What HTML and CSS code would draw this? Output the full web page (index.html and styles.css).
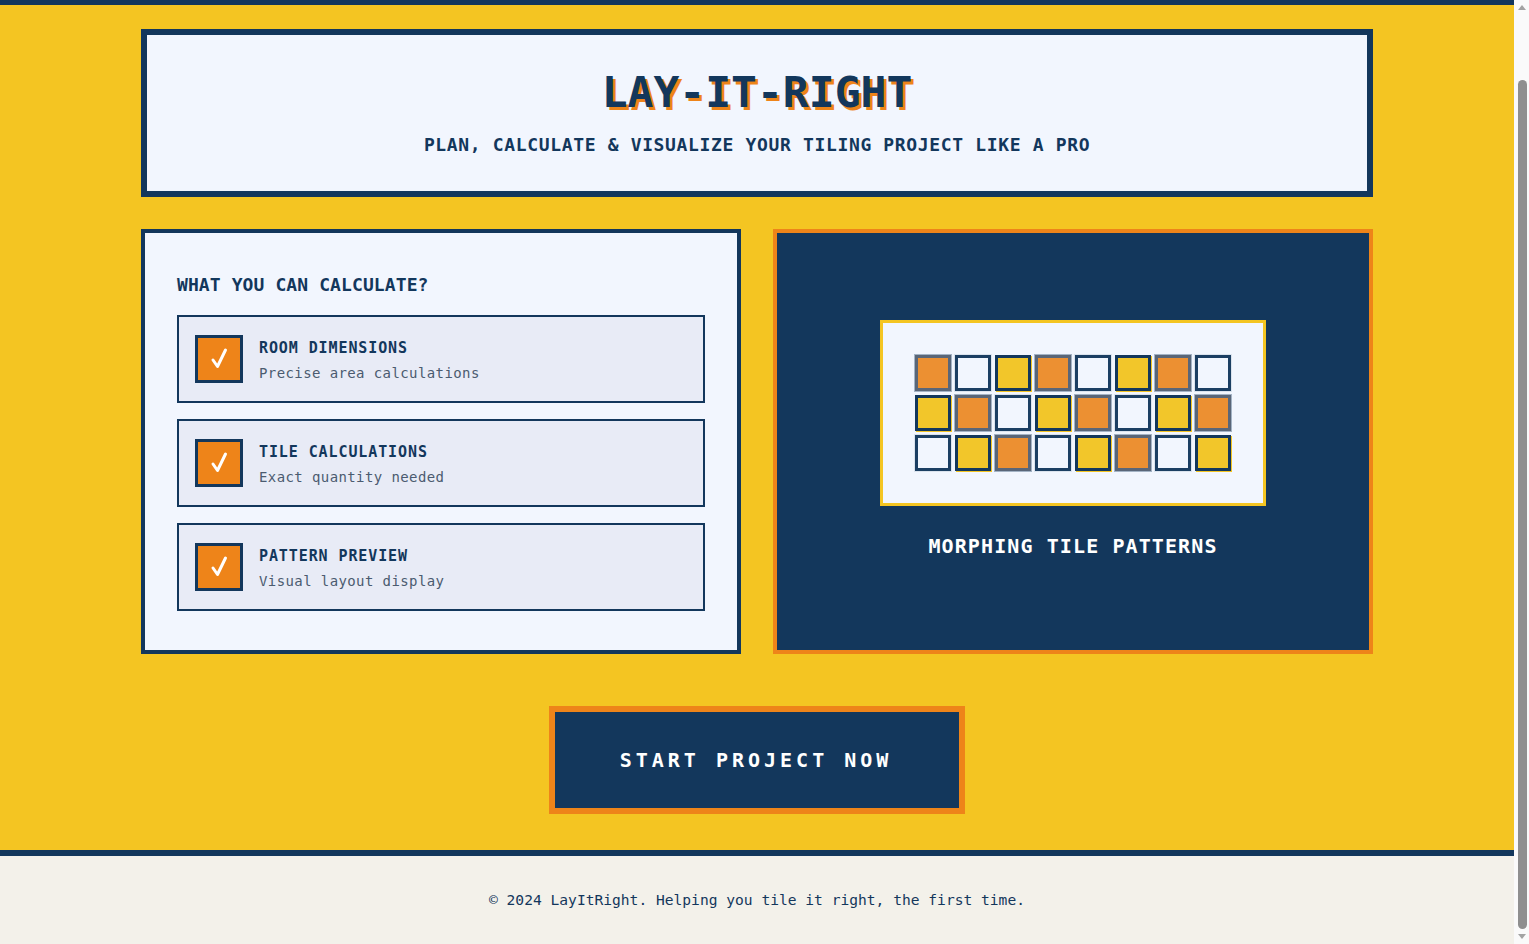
FILE: index.html
```html
<!DOCTYPE html>
<html lang="en">
<head>
<meta charset="utf-8">
<title>LayItRight</title>
<link rel="stylesheet" href="styles.css">
</head>
<body>
<main class="page">
  <header class="hero">
    <h1 class="hero-title">LAY-IT-RIGHT</h1>
    <p class="hero-sub">PLAN, CALCULATE &amp; VISUALIZE YOUR TILING PROJECT LIKE A PRO</p>
  </header>

  <section class="cards">
    <div class="card card-features">
      <h2 class="features-title">WHAT YOU CAN CALCULATE?</h2>
      <ul class="feature-list">
        <li class="feature">
          <span class="check"><svg class="check-icon" viewBox="0 0 18 22" aria-hidden="true"><path d="M3 13 L7.5 19.5 L15.5 3"/></svg></span>
          <div class="feature-text">
            <div class="feature-name">ROOM DIMENSIONS</div>
            <div class="feature-desc">Precise area calculations</div>
          </div>
        </li>
        <li class="feature">
          <span class="check"><svg class="check-icon" viewBox="0 0 18 22" aria-hidden="true"><path d="M3 13 L7.5 19.5 L15.5 3"/></svg></span>
          <div class="feature-text">
            <div class="feature-name">TILE CALCULATIONS</div>
            <div class="feature-desc">Exact quantity needed</div>
          </div>
        </li>
        <li class="feature">
          <span class="check"><svg class="check-icon" viewBox="0 0 18 22" aria-hidden="true"><path d="M3 13 L7.5 19.5 L15.5 3"/></svg></span>
          <div class="feature-text">
            <div class="feature-name">PATTERN PREVIEW</div>
            <div class="feature-desc">Visual layout display</div>
          </div>
        </li>
      </ul>
    </div>

    <div class="card card-preview">
      <div class="preview-box">
        <div class="tile-grid">
          <span class="tile"></span><span class="tile"></span><span class="tile"></span><span class="tile"></span>
          <span class="tile"></span><span class="tile"></span><span class="tile"></span><span class="tile"></span>
          <span class="tile"></span><span class="tile"></span><span class="tile"></span><span class="tile"></span>
          <span class="tile"></span><span class="tile"></span><span class="tile"></span><span class="tile"></span>
          <span class="tile"></span><span class="tile"></span><span class="tile"></span><span class="tile"></span>
          <span class="tile"></span><span class="tile"></span><span class="tile"></span><span class="tile"></span>
        </div>
      </div>
      <p class="preview-label">MORPHING TILE PATTERNS</p>
    </div>
  </section>

  <div class="cta-wrap">
    <button class="cta">START PROJECT NOW</button>
  </div>
</main>

<footer class="footer">
  <p class="footer-text">© 2024 LayItRight. Helping you tile it right, the first time.</p>
</footer>

<div class="scrollbar" aria-hidden="true">
  <span class="sb-arrow sb-up"></span>
  <span class="sb-thumb"></span>
  <span class="sb-arrow sb-down"></span>
</div>
</body>
</html>
```

FILE: styles.css
```css
body {
  margin: 0 15px 0 0;
  background: #f4c522;
  border-top: 5px solid #13375c;
  font-family: "DejaVu Sans Mono", "Liberation Mono", monospace;
  color: #13375c;
}

.page {
  max-width: 1232px;
  margin: 0 auto;
  padding: 24px 0 36px;
}

/* Header */
.hero {
  background: #f2f6fe;
  border: 6px solid #13375c;
  padding: 31px 20px 33px;
  text-align: center;
}

.hero-title {
  margin: 0;
  font-size: 43px;
  line-height: 52px;
  font-weight: bold;
  color: #13375c;
  text-shadow: 3px 3px 0 #ee8419;
}

.hero-sub {
  margin: 14px 0 0;
  font-size: 18px;
  line-height: 26px;
  font-weight: bold;
  letter-spacing: 0.65px;
}

/* Cards */
.cards {
  display: grid;
  grid-template-columns: 1fr 1fr;
  gap: 32px;
  margin-top: 32px;
}

.card {
  border: 4px solid #13375c;
}

.card-features {
  background: #f2f6fe;
  padding: 40px 32px 39px;
}

.features-title {
  margin: 0 0 18px;
  font-size: 18px;
  line-height: 24px;
  font-weight: bold;
  letter-spacing: 0.1px;
}

.feature-list {
  list-style: none;
  margin: 0;
  padding: 0;
  display: flex;
  flex-direction: column;
  gap: 16px;
}

.feature {
  display: flex;
  align-items: center;
  gap: 16px;
  height: 88px;
  box-sizing: border-box;
  padding: 0 16px;
  background: #e8ebf6;
  border: 2px solid #13375c;
}

.check {
  flex: none;
  width: 48px;
  height: 48px;
  box-sizing: border-box;
  background: #ee8419;
  border: 3px solid #13375c;
  display: flex;
  align-items: center;
  justify-content: center;
}

.check-icon {
  width: 18px;
  height: 22px;
  margin-top: -2px;
  fill: none;
  stroke: #ffffff;
  stroke-width: 3;
  stroke-linecap: round;
  stroke-linejoin: round;
}

.feature-text {
  display: flex;
  flex-direction: column;
  gap: 5px;
  padding-top: 2px;
}

.feature-name {
  font-size: 15px;
  line-height: 20px;
  font-weight: bold;
  letter-spacing: 0.9px;
}

.feature-desc {
  font-size: 14px;
  line-height: 20px;
  letter-spacing: 0.4px;
  color: #4b5b70;
}

/* Preview card */
.card-preview {
  background: #13375c;
  border-color: #ee8419;
  display: flex;
  flex-direction: column;
  align-items: center;
  justify-content: center;
  padding-bottom: 3px;
}

.preview-box {
  background: #f2f6fe;
  border: 3px solid #f4c522;
  padding: 32px;
}

.tile-grid {
  display: grid;
  grid-template-columns: repeat(8, 36px);
  grid-auto-rows: 36px;
  gap: 4px;
}

.tile {
  box-sizing: border-box;
  border: 3px solid #1c3f63;
  background: #f2f6fe;
  box-shadow: 0 0 0 1px rgba(19, 55, 92, 0.1);
}

.tile:nth-child(3n+1) {
  background: #ec9032;
  border-color: #5a6678;
  box-shadow: 0 0 0 1px rgba(19, 55, 92, 0.35);
}

.tile:nth-child(3n) {
  background: #f2c62a;
  border-color: #13375c;
  box-shadow: 1px 1px 0 #f4c522;
}

.preview-label {
  margin: 26px 0 0;
  font-size: 20px;
  line-height: 28px;
  font-weight: bold;
  letter-spacing: 1.1px;
  color: #ffffff;
}

/* CTA */
.cta-wrap {
  display: flex;
  justify-content: center;
  margin-top: 52px;
}

.cta {
  font-family: "DejaVu Sans Mono", "Liberation Mono", monospace;
  font-size: 20px;
  line-height: 24px;
  font-weight: bold;
  letter-spacing: 4px;
  color: #ffffff;
  background: #13375c;
  border: 6px solid #ee8419;
  padding: 36px 67px 36px 65px;
  cursor: pointer;
}

/* Footer */
.footer {
  background: #f3f1ea;
  border-top: 6px solid #13375c;
  padding: 32px 20px 104px;
  text-align: center;
}

.footer-text {
  margin: 0;
  font-size: 14.6px;
  line-height: 24px;
  color: #13375c;
}

/* Fake browser scrollbar overlay */
.scrollbar {
  position: fixed;
  top: 0;
  right: 0;
  bottom: 0;
  width: 15px;
  background: #fafafa;
  display: flex;
  flex-direction: column;
  align-items: center;
}

.sb-arrow {
  flex: none;
  width: 0;
  height: 0;
  border-left: 4px solid transparent;
  border-right: 4px solid transparent;
}

.sb-up {
  margin-top: 5px;
  border-bottom: 5px solid #a3a3a3;
}

.sb-down {
  margin: 5px 0 5px;
  border-top: 5px solid #a3a3a3;
}

.sb-thumb {
  flex: 1;
  width: 9px;
  margin-top: 70px;
  margin-left: 1px;
  background: #8f8f8f;
  border-radius: 5px;
}
```
